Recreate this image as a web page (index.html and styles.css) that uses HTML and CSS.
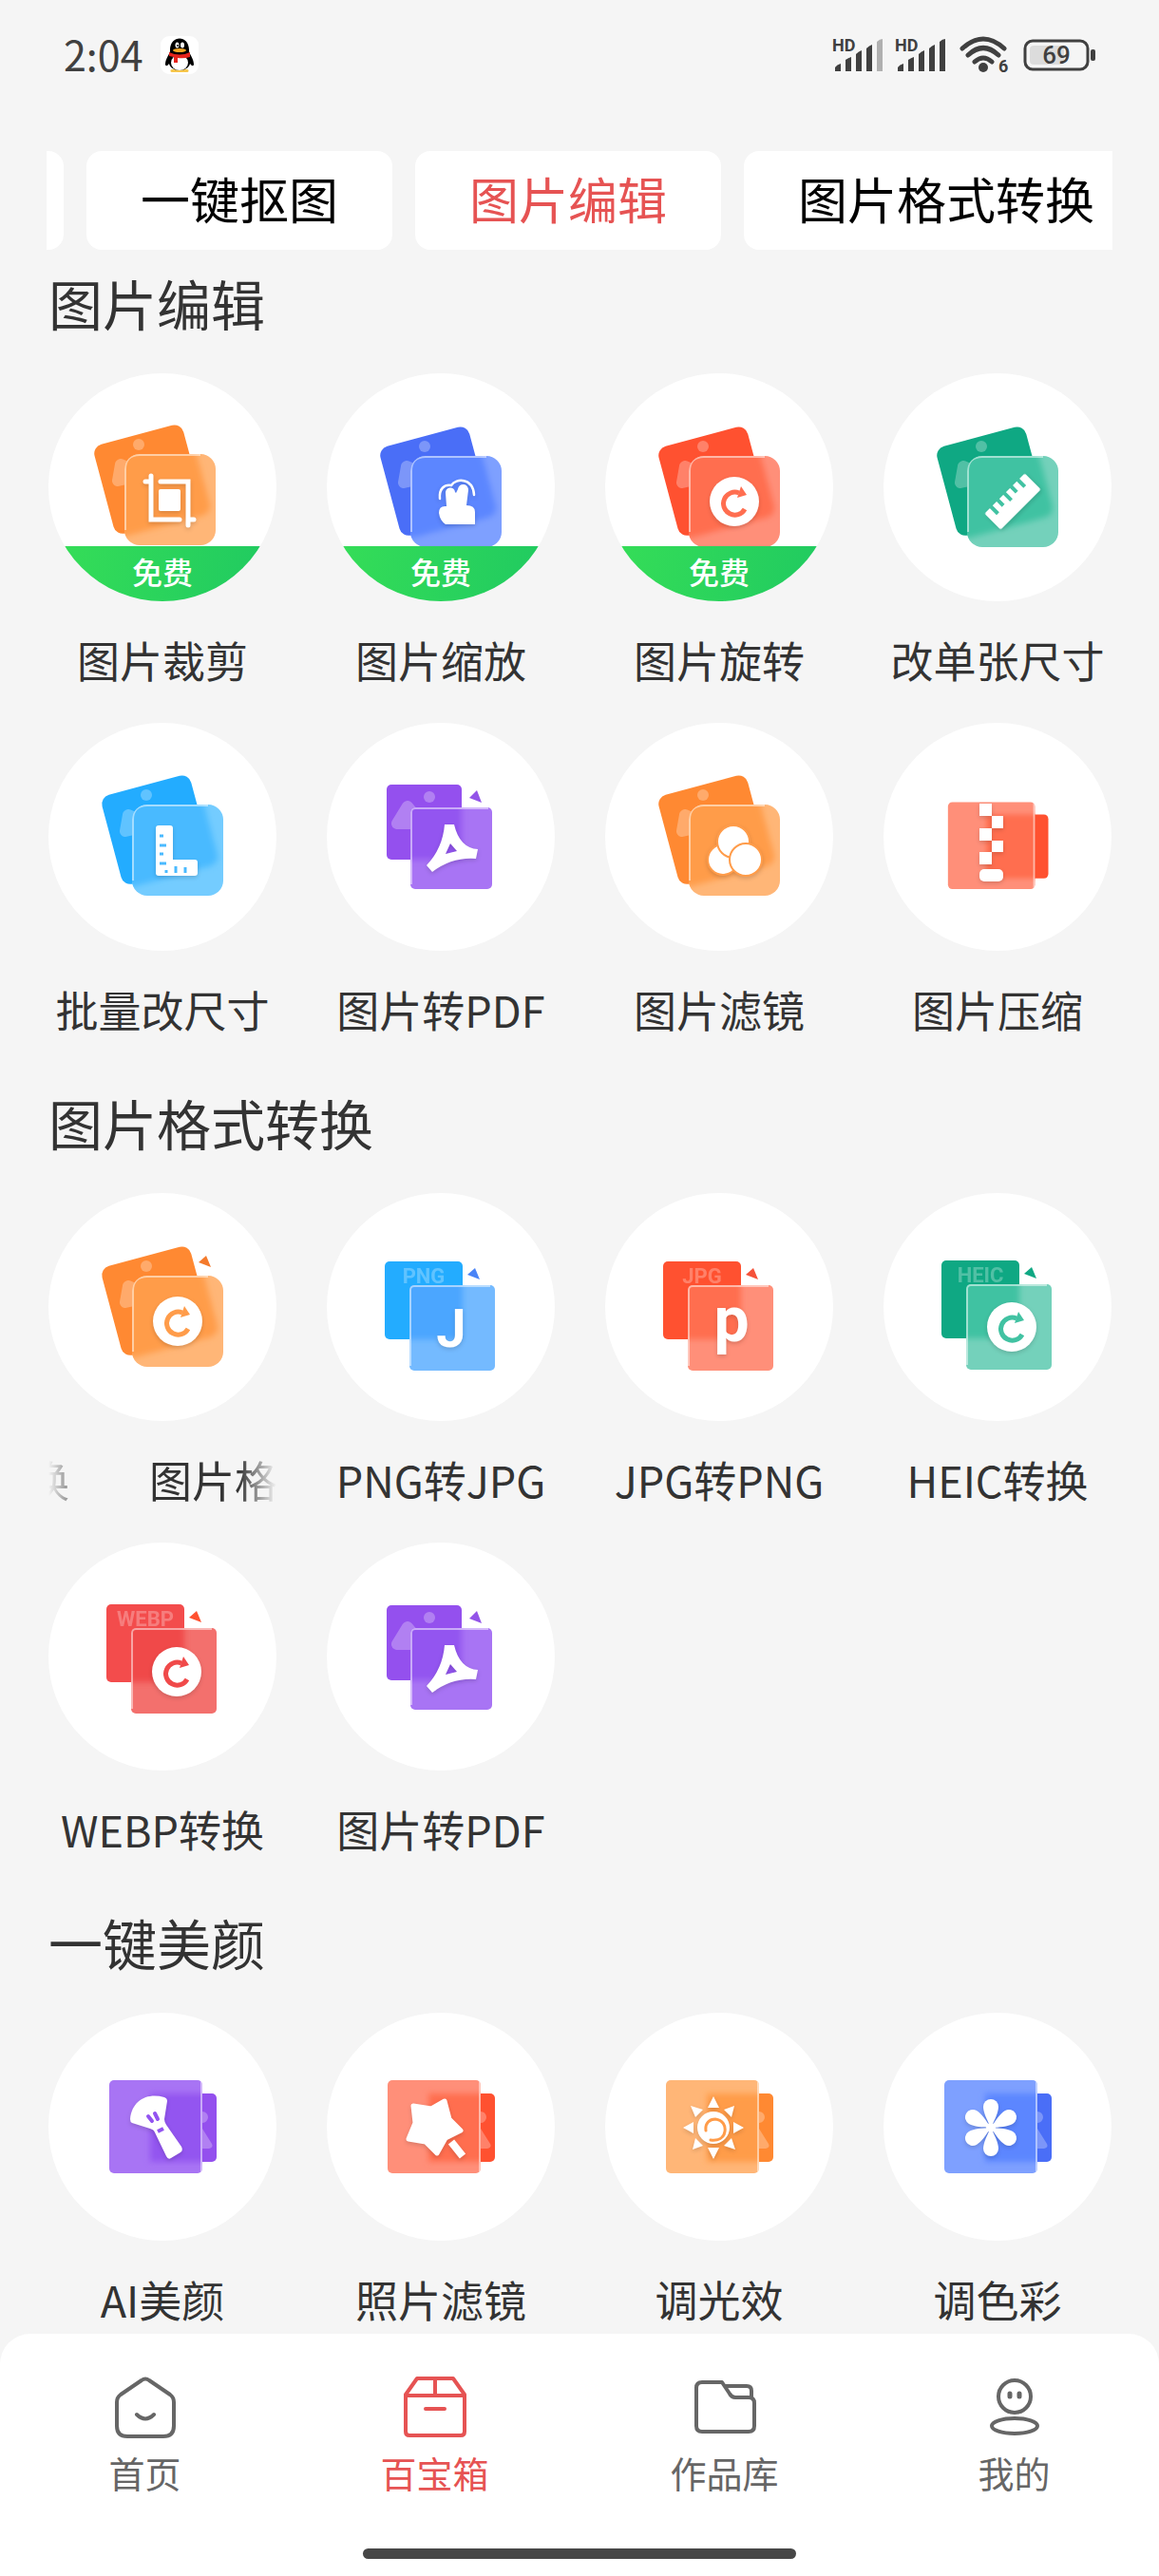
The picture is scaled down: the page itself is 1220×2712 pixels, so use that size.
FILE: index.html
```html
<!DOCTYPE html>
<html lang="zh-CN">
<head>
  <meta charset="UTF-8" />
  <meta name="viewport" content="width=device-width, initial-scale=1" />
  <title>百宝箱</title>
  <link rel="stylesheet" href="styles.css">
</head>
<body>
  <!-- shared icon parts -->
  <svg class="defs" width="0" height="0" aria-hidden="true">
    <defs>
      <filter id="soft" x="-20%" y="-20%" width="140%" height="140%"><feGaussianBlur stdDeviation="3" /></filter>
      <clipPath id="clip-tilt"><rect x="80" y="85" width="96" height="96" rx="16" /></clipPath>
      <clipPath id="clip-pair"><rect x="87" y="97" width="90" height="90" rx="5" /></clipPath>
      <clipPath id="clip-pdf"><rect x="88" y="89" width="86" height="86" rx="5" /></clipPath>
      <clipPath id="clip-side"><rect x="64" y="71" width="98" height="98" rx="5" /></clipPath>

      <symbol id="tilt" viewBox="0 0 240 240">
        <rect class="back" x="57" y="63" width="97" height="97" rx="10" transform="rotate(-15 106 112)" />
        <circle class="tint" cx="95" cy="75" r="6" />
        <path class="tint tint-line" d="M76 96L73 113L100 107Z" />
        <rect class="front" x="80" y="85" width="96" height="96" rx="16" />
        <g clip-path="url(#clip-tilt)">
          <rect class="mid" x="57" y="63" width="104" height="100" rx="10" transform="rotate(-15 106 112)" filter="url(#soft)" />
          <path class="edge" d="M81 165V101Q81 86 96 86H160" />
        </g>
      </symbol>
      <symbol id="pair" viewBox="0 0 240 240">
        <rect class="back" x="61" y="72" width="82" height="82" rx="5" />
        <path class="spark" d="M156 79L148 86L161 91Z" />
        <rect class="front" x="87" y="97" width="90" height="90" rx="5" />
        <g clip-path="url(#clip-pair)">
          <rect class="mid" x="61" y="72" width="82" height="82" filter="url(#soft)" />
          <path class="edge" d="M88 182V102Q88 98 92 98H172" />
        </g>
      </symbol>
      <symbol id="pdf" viewBox="0 0 240 240">
        <rect class="back" x="63" y="65" width="79" height="79" rx="5" />
        <circle class="tint" cx="108" cy="78" r="6" />
        <path class="tint tint-line" d="M85 88L74 106H100Z" />
        <path class="spark" d="M158 71L150 79L163 84Z" />
        <rect class="front" x="88" y="89" width="86" height="86" rx="5" />
        <g clip-path="url(#clip-pdf)">
          <rect class="mid" x="63" y="65" width="79" height="79" filter="url(#soft)" />
          <path class="edge" d="M89 170V94Q89 90 93 90H170" />
        </g>
        <path class="glyph" fill-rule="evenodd" d="M124 107H134Q140 132 159 133L157 143Q132 141 111 157L105 150Q122 132 124 107ZM130 127L125 138L137 135Z" />
      </symbol>
      <symbol id="side" viewBox="0 0 240 240">
        <rect class="back" x="105" y="85" width="72" height="72" rx="5" />
        <rect class="front" x="64" y="71" width="98" height="98" rx="5" />
        <g clip-path="url(#clip-side)">
          <rect class="mid" x="107" y="85" width="72" height="72" filter="url(#soft)" />
          <path class="edge" d="M161 71V169" />
        </g>
      </symbol>
      <symbol id="side-photo" viewBox="0 0 240 240">
        <use href="#side" />
        <path class="tint" d="M162 104A6 6 0 0 1 162 116ZM162 122L172 138Q174 142 169 143H162Z" />
      </symbol>
      <symbol id="reload" viewBox="-30 -30 60 60" overflow="visible">
        <circle class="glyph" r="26" />
        <path class="cut" d="M11 8A12 12 0 1 1 5 -9" stroke-width="5" />
        <path class="cut-fill" d="M7 -16L13 -7L3 -4Z" />
      </symbol>
    </defs>
  </svg>

  <header class="status-bar">
    <span class="clock">2:04</span>
    <svg class="qq" viewBox="0 0 40 40" width="40" height="40" aria-hidden="true">
      <rect width="40" height="40" rx="9" fill="#fff" />
      <path d="M12 36.500h16" stroke="#f7c64b" stroke-width="3" stroke-linecap="round" />
      <path d="M10 16C9 -2 31 -2 30 16C31 20 35 24 35 30Q34 33 31 29C30 33 26 36 20 36C14 36 10 33 9 29Q6 33 5 30C5 24 9 20 10 16Z" fill="#000" />
      <ellipse cx="20" cy="28" rx="9" ry="8" fill="#fff" />
      <ellipse cx="17.500" cy="9.500" rx="2" ry="3" fill="#fff" />
      <ellipse cx="23" cy="9.500" rx="2" ry="3" fill="#fff" />
      <circle cx="18" cy="10" r="1" fill="#000" />
      <ellipse cx="20" cy="15" rx="7" ry="2" fill="#f5a623" />
      <path d="M9 17Q20 22 31 17V22Q25 24 18 23V28H14V22L9 21Z" fill="#e5231c" />
    </svg>
    <div class="status-icons">
      <svg class="signal" viewBox="0 0 54 36" width="54" height="36" aria-hidden="true">
        <text x="0" y="14" class="hd">HD</text>
        <path d="M3 35V31Q5 28 9 27V35ZM14 35V23Q17 21 20 20V35ZM25 35V17Q28 14 31 13V35ZM36 35V11Q39 8 42 7V35Z" />
        <path class="dim" d="M47 35V4Q50 1 53 1V35Z" />
      </svg>
      <svg class="signal" viewBox="0 0 54 36" width="54" height="36" aria-hidden="true">
        <text x="0" y="14" class="hd">HD</text>
        <path d="M3 35V31Q5 28 9 27V35ZM14 35V23Q17 21 20 20V35ZM25 35V17Q28 14 31 13V35ZM36 35V11Q39 8 42 7V35ZM47 35V4Q50 1 53 1V35Z" />
      </svg>
      <svg class="wifi" viewBox="0 0 52 40" width="52" height="40" aria-hidden="true">
        <path d="M3 13Q25 -7 47 13M9 20Q25 5 41 20M16 27Q25 19 34 27" />
        <circle cx="25" cy="33" r="5" />
        <text x="41" y="38" class="hd">6</text>
      </svg>
      <svg class="battery" viewBox="0 0 76 34" width="76" height="34" aria-hidden="true">
        <rect class="level" x="7" y="7" width="36" height="20" rx="4" />
        <rect class="shell" x="2" y="2" width="66" height="30" rx="8" />
        <rect x="71" y="11" width="5" height="12" rx="2" />
        <text x="35" y="26" class="percent">69</text>
      </svg>
    </div>
  </header>

  <nav class="tabs">
    <button type="button" class="tab-cut" aria-label="上一个"></button>
    <button type="button" class="tab">一键抠图</button>
    <button type="button" class="tab active">图片编辑</button>
    <button type="button" class="tab">图片格式转换</button>
  </nav>

  <main>
    <section>
      <h2>图片编辑</h2>
      <div class="grid">
        <a href="#" class="tool orange">
          <span class="disc">
            <svg viewBox="0 0 240 240" aria-hidden="true">
              <use href="#tilt" />
              <path class="glyph-line" stroke-width="5" d="M108 108V154H138M102 114H108M118 114H147V160M147 154H153" />
              <rect class="glyph" x="116" y="122" width="23" height="23" rx="2" />
            </svg>
            <span class="free">免费</span>
          </span>
          <span class="label">图片裁剪</span>
        </a>
        <a href="#" class="tool blue">
          <span class="disc">
            <svg viewBox="0 0 240 240" aria-hidden="true">
              <use href="#tilt" x="8" y="2" />
              <path class="glyph-line" stroke-width="2.500" d="M119 132C118 121 124 117 131 118C136 110 154 110 155 128" />
              <path class="glyph" d="M125 126a5 5 0 0 1 10 -1l1 1 2 -4a5.500 5.500 0 0 1 11 1l-2 16q9 0 9 7v13h-31q-6 -4 -7 -12q0 -8 8 -7z" />
            </svg>
            <span class="free">免费</span>
          </span>
          <span class="label">图片缩放</span>
        </a>
        <a href="#" class="tool red">
          <span class="disc">
            <svg viewBox="0 0 240 240" aria-hidden="true">
              <use href="#tilt" x="8" y="2" />
              <use href="#reload" x="106" y="105" width="60" height="60" />
            </svg>
            <span class="free">免费</span>
          </span>
          <span class="label">图片旋转</span>
        </a>
        <a href="#" class="tool green">
          <span class="disc">
            <svg viewBox="0 0 240 240" aria-hidden="true">
              <use href="#tilt" x="8" y="2" />
              <g transform="rotate(-45 136 135)">
                <rect class="glyph" x="106" y="123" width="60" height="24" rx="2" />
                <path class="cut" stroke-width="4" d="M116 121V133M126 121V131M136 121V133M146 121V131M156 121V133" />
              </g>
            </svg>
          </span>
          <span class="label">改单张尺寸</span>
        </a>
        <a href="#" class="tool sky">
          <span class="disc">
            <svg viewBox="0 0 240 240" aria-hidden="true">
              <use href="#tilt" x="8" y="1" />
              <path class="glyph" d="M116 108H128Q131 108 131 111V144H154Q157 144 157 147V158Q157 161 154 161H116Q113 161 113 158V111Q113 108 116 108Z" />
              <path class="cut tick" d="M117 119H121M117 129H124M117 138H121M117 148H124M124 158V155M134 158V151M144 158V152" />
            </svg>
          </span>
          <span class="label">批量改尺寸</span>
        </a>
        <a href="#" class="tool purple">
          <span class="disc">
            <svg viewBox="0 0 240 240" aria-hidden="true"><use href="#pdf" /></svg>
          </span>
          <span class="label">图片转PDF</span>
        </a>
        <a href="#" class="tool orange">
          <span class="disc">
            <svg viewBox="0 0 240 240" aria-hidden="true">
              <use href="#tilt" x="8" y="1" />
              <g class="glyph ringed">
                <circle cx="124" cy="144" r="16" />
                <circle cx="135" cy="125" r="17" />
                <circle cx="148" cy="144" r="17" />
              </g>
            </svg>
          </span>
          <span class="label">图片滤镜</span>
        </a>
        <a href="#" class="tool red">
          <span class="disc">
            <svg viewBox="0 0 240 240" aria-hidden="true">
              <use href="#side" transform="translate(8 17) scale(.935)" />
              <path class="glyph" d="M101 85h13v13h-13zM114 98h12v13h-12zM101 111h13v13h-13zM114 124h12v12h-12zM101 136h13v13h-13z" />
              <rect class="glyph" x="101" y="154" width="25" height="13" rx="5" />
            </svg>
          </span>
          <span class="label">图片压缩</span>
        </a>
      </div>
    </section>

    <section>
      <h2>图片格式转换</h2>
      <div class="grid">
        <a href="#" class="tool orange">
          <span class="disc">
            <svg viewBox="0 0 240 240" aria-hidden="true">
              <use href="#tilt" x="8" y="2" />
              <path class="spark" d="M166 66L158 73L171 78Z" />
              <use href="#reload" x="106" y="105" width="60" height="60" />
            </svg>
          </span>
          <span class="label marquee"><span>图片格式转换</span><span aria-hidden="true">图片格式转换</span></span>
        </a>
        <a href="#" class="tool azure">
          <span class="disc">
            <svg viewBox="0 0 240 240" aria-hidden="true">
              <use href="#pair" />
              <text class="format" x="102" y="95">PNG</text>
              <text class="glyph letter" x="131" y="162">J</text>
            </svg>
          </span>
          <span class="label">PNG转JPG</span>
        </a>
        <a href="#" class="tool red">
          <span class="disc">
            <svg viewBox="0 0 240 240" aria-hidden="true">
              <use href="#pair" />
              <text class="format" x="102" y="95">JPG</text>
              <text class="glyph letter lower" x="133" y="156">p</text>
            </svg>
          </span>
          <span class="label">JPG转PNG</span>
        </a>
        <a href="#" class="tool green">
          <span class="disc">
            <svg viewBox="0 0 240 240" aria-hidden="true">
              <use href="#pair" y="-1" />
              <text class="format" x="102" y="94">HEIC</text>
              <use href="#reload" x="105" y="111" width="60" height="60" />
            </svg>
          </span>
          <span class="label">HEIC转换</span>
        </a>
        <a href="#" class="tool crimson">
          <span class="disc">
            <svg viewBox="0 0 240 240" aria-hidden="true">
              <use href="#pair" y="-7" />
              <text class="format" x="102" y="88">WEBP</text>
              <use href="#reload" x="105" y="106" width="60" height="60" />
            </svg>
          </span>
          <span class="label">WEBP转换</span>
        </a>
        <a href="#" class="tool purple">
          <span class="disc">
            <svg viewBox="0 0 240 240" aria-hidden="true"><use href="#pdf" y="1" /></svg>
          </span>
          <span class="label">图片转PDF</span>
        </a>
      </div>
    </section>

    <section>
      <h2>一键美颜</h2>
      <div class="grid">
        <a href="#" class="tool purple">
          <span class="disc">
            <svg viewBox="0 0 240 240" aria-hidden="true">
              <use href="#side-photo" />
              <path class="glyph" d="M86 112C88 92 104 84 122 89Q125 90 125 93L122 112Q122 115 124 118L140 141Q142 145 139 147L129 153Q126 155 124 151L112 126Q111 123 107 122L88 116Q86 115 86 112Z" />
              <path class="cut" stroke-width="4" stroke-linecap="round" d="M105 109L109 114M112 106L115 112" />
              <path class="cut" stroke-width="4" d="M115 125L121 122" />
            </svg>
          </span>
          <span class="label">AI美颜</span>
        </a>
        <a href="#" class="tool red">
          <span class="disc">
            <svg viewBox="0 0 240 240" aria-hidden="true">
              <use href="#side-photo" />
              <path class="glyph round" d="M91 98L110 101L124 93L129 112L141 124L125 132L116 148L104 136L86 133L93 116Z" />
              <path class="glyph-line butt" stroke-width="8" d="M131 136L143 151" />
            </svg>
          </span>
          <span class="label">照片滤镜</span>
        </a>
        <a href="#" class="tool orange">
          <span class="disc">
            <svg viewBox="0 0 240 240" aria-hidden="true">
              <use href="#side-photo" />
              <g transform="translate(114 121)">
                <path class="glyph" d="M-6 -21L0 -33L6 -21ZM-6 21L0 33L6 21ZM-21 -6L-32 0L-21 6ZM21 -6L32 0L21 6ZM-19 -11L-24 -23L-11 -19ZM19 -11L22 -23L11 -19ZM-19 11L-22 23L-11 19ZM19 11L23 23L11 19Z" />
                <circle class="glyph" r="17" />
                <path class="cut" stroke-width="3" stroke-linecap="round" d="M-8 3C-9 -5 -4 -9 2 -9C10 -8 13 -2 12 4C11 11 5 14 -3 13" />
              </g>
            </svg>
          </span>
          <span class="label">调光效</span>
        </a>
        <a href="#" class="tool blue">
          <span class="disc">
            <svg viewBox="0 0 240 240" aria-hidden="true">
              <use href="#side-photo" />
              <g class="glyph" transform="translate(113 121)">
                <circle r="5" />
                <path id="petal" d="M0 0C-4 -8 -8 -16 -8 -22A8 8 0 0 1 8 -22C8 -16 4 -8 0 0Z" />
                <use href="#petal" transform="rotate(60)" />
                <use href="#petal" transform="rotate(120)" />
                <use href="#petal" transform="rotate(180)" />
                <use href="#petal" transform="rotate(240)" />
                <use href="#petal" transform="rotate(300)" />
              </g>
            </svg>
          </span>
          <span class="label">调色彩</span>
        </a>
      </div>
    </section>
  </main>

  <footer class="bottom">
    <nav class="bottom-nav">
      <a href="#">
        <svg viewBox="0 0 72 72" width="72" height="72" aria-hidden="true">
          <path d="M32 8Q36 5 40 8L62 23Q66 26 66 31V56Q66 67 55 67H17Q6 67 6 56V31Q6 26 10 23ZM27 44Q36 53 45 44" />
        </svg>
        首页
      </a>
      <a href="#" class="active">
        <svg viewBox="0 0 72 72" width="72" height="72" aria-hidden="true">
          <path d="M17 6H55L67 23V62Q67 66 63 66H9Q5 66 5 62V23ZM5 24H67M36 6V24M26 38H46" />
        </svg>
        百宝箱
      </a>
      <a href="#">
        <svg viewBox="0 0 72 72" width="72" height="72" aria-hidden="true">
          <path d="M12 10H33L41 22Q43 26 47 26H61Q67 26 67 32V56Q67 62 61 62H12Q6 62 6 56V16Q6 10 12 10ZM36 14H59Q64 14 64 19V26" />
        </svg>
        作品库
      </a>
      <a href="#">
        <svg viewBox="0 0 72 72" width="72" height="72" aria-hidden="true">
          <circle cx="36" cy="25" r="17" />
          <path d="M31 22V25M41 22V25" stroke-width="5" />
          <ellipse cx="36" cy="56" rx="24" ry="8" />
        </svg>
        我的
      </a>
    </nav>
    <div class="home-bar"></div>
  </footer>
</body>
</html>
```
FILE: styles.css
```css
* {
  box-sizing: border-box;
}
body {
  margin: 0;
  min-height: 100vh;
  display: flex;
  flex-direction: column;
  background: #f5f5f5;
  color: #333;
  font-family: "Noto Sans CJK SC", "Noto Sans", sans-serif;
}
a {
  color: inherit;
  text-decoration: none;
}
.defs {
  position: absolute;
}

/* status bar */
.status-bar {
  display: flex;
  align-items: center;
  height: 116px;
  padding: 0 67px;
  color: #404040;
}
.clock {
  padding-bottom: 5px;
  font-size: 43px;
  line-height: 60px;
}
.qq {
  margin-left: 18px;
}
.status-icons {
  display: flex;
  align-items: center;
  gap: 12px;
  margin-left: auto;
  fill: #404040;
}
.status-icons svg {
  overflow: visible;
}
.signal .dim {
  fill: #b0b0b0;
}
.hd {
  font: bold 18px Roboto, sans-serif;
}
.wifi {
  margin: 0 3px 0 2px;
}
.wifi path {
  fill: none;
  stroke: #404040;
  stroke-width: 5;
  stroke-linecap: round;
}
.battery .level {
  fill: #dcdcdc;
}
.battery .shell {
  fill: none;
  stroke: #404040;
  stroke-width: 3;
}
.percent {
  font: 500 26px Roboto, sans-serif;
  text-anchor: middle;
}

/* category tabs */
.tabs {
  display: flex;
  gap: 24px;
  margin: 43px 49px 22px;
  overflow: hidden;
}
.tab,
.tab-cut {
  flex: none;
  height: 104px;
  padding: 0 57px 5px;
  border: none;
  border-radius: 16px;
  background: #fff;
  color: #000;
  font-family: inherit;
  font-size: 52px;
  white-space: nowrap;
  cursor: pointer;
}
.tab-cut {
  width: 18px;
  padding: 0;
  border-radius: 0 16px 16px 0;
}
.tab.active {
  color: #e65353;
}

/* tools */
main {
  padding: 0 50px 0 51px;
}
section + section {
  margin-top: 53px;
}
h2 {
  margin: 0 0 42px;
  font-size: 57px;
  line-height: 66px;
  font-weight: 400;
}
.grid {
  display: grid;
  grid-template-columns: repeat(4, minmax(0, 1fr));
  gap: 34px 53px;
}
.tool {
  display: flex;
  flex-direction: column;
  align-items: center;
  gap: 32px;
  padding-bottom: 2px;
}
.disc {
  position: relative;
  width: 100%;
  aspect-ratio: 1;
  border-radius: 50%;
  background: #fff;
  overflow: hidden;
}
.disc svg {
  display: block;
  width: 100%;
}
.free {
  position: absolute;
  left: 0;
  right: 0;
  bottom: 0;
  height: 58px;
  background: linear-gradient(100deg, #36de57, #1fc961);
  color: #fff;
  font-size: 32px;
  line-height: 52px;
  font-weight: 500;
  text-align: center;
}
.label {
  font-size: 45px;
  line-height: 60px;
  white-space: nowrap;
}
/* long name, scrolled part of the way round */
.marquee {
  display: flex;
  gap: 84px;
  width: 100%;
  overflow: hidden;
  -webkit-mask-image: linear-gradient(90deg, transparent, #000 40px, #000 calc(100% - 40px), transparent);
  mask-image: linear-gradient(90deg, transparent, #000 40px, #000 calc(100% - 40px), transparent);
}
.marquee span {
  flex: 1;
  min-width: 0;
  overflow: hidden;
}
.marquee span:first-child {
  flex: none;
  margin-left: -248px;
}

/* icon colours */
.orange { --back: #ff8932; --mid: #ff9c4a; --front: #ffb677; --spark: #f47a2c; }
.blue { --back: #4a6ef7; --mid: #5b86ff; --front: #7ea0ff; }
.red { --back: #ff5130; --mid: #ff6e50; --front: #ff8f79; --spark: #f5523a; }
.green { --back: #0fa883; --mid: #41c2a2; --front: #74d1bb; --spark: #0fa883; }
.sky { --back: #23acff; --mid: #4abaff; --front: #74ccff; }
.azure { --back: #23acff; --mid: #4ba6ff; --front: #74baff; --spark: #4a84f7; }
.purple { --back: #9450ee; --mid: #9354f0; --front: #a874f4; --spark: #9354e8; }
.crimson { --back: #f34c4c; --mid: #f04a4a; --front: #f3706d; --spark: #ff5130; }
.back { fill: var(--back); }
.mid { fill: var(--mid); }
.front { fill: var(--front); }
.spark { fill: var(--spark); }
.tint {
  fill: #fff;
  opacity: 0.28;
}
.tint-line {
  stroke: #fff;
  stroke-width: 12;
  stroke-linejoin: round;
}
.edge {
  fill: none;
  stroke: #fff;
  stroke-opacity: 0.5;
  stroke-width: 2;
}
.glyph {
  fill: #fff;
  filter: drop-shadow(0 2px 2px rgba(0, 0, 0, 0.15));
}
.glyph-line {
  fill: none;
  stroke: #fff;
  stroke-linecap: round;
  filter: drop-shadow(0 2px 2px rgba(0, 0, 0, 0.15));
}
.glyph-line.butt {
  stroke-linecap: butt;
}
.round {
  stroke: #fff;
  stroke-width: 5;
  stroke-linejoin: round;
}
.ringed {
  stroke: var(--mid);
  stroke-width: 2;
}
.cut {
  fill: none;
  stroke: var(--mid);
}
.cut-fill {
  fill: var(--mid);
}
.tick {
  stroke-width: 3;
}
.format {
  font: bold 22px Roboto, sans-serif;
  text-anchor: middle;
  fill: #fff;
  opacity: 0.28;
}
.letter {
  font: bold 56px Roboto, sans-serif;
  text-anchor: middle;
}
.letter.lower {
  font-size: 66px;
}

/* bottom bar */
.bottom {
  margin-top: auto;
  padding: 41px 0 18px;
  border-radius: 32px 32px 0 0;
  background: #fff;
}
.bottom-nav {
  display: grid;
  grid-template-columns: repeat(4, 1fr);
  color: #666;
}
.bottom-nav a {
  display: flex;
  flex-direction: column;
  align-items: center;
  gap: 8px;
  font-size: 38px;
  line-height: 50px;
}
.bottom-nav .active {
  color: #e65353;
}
.bottom-nav svg {
  fill: none;
  stroke: currentColor;
  stroke-width: 4;
  stroke-linecap: round;
  stroke-linejoin: round;
}
.home-bar {
  width: 456px;
  max-width: 60%;
  height: 11px;
  margin: 55px auto 0;
  border-radius: 6px;
  background: #474747;
}
```
